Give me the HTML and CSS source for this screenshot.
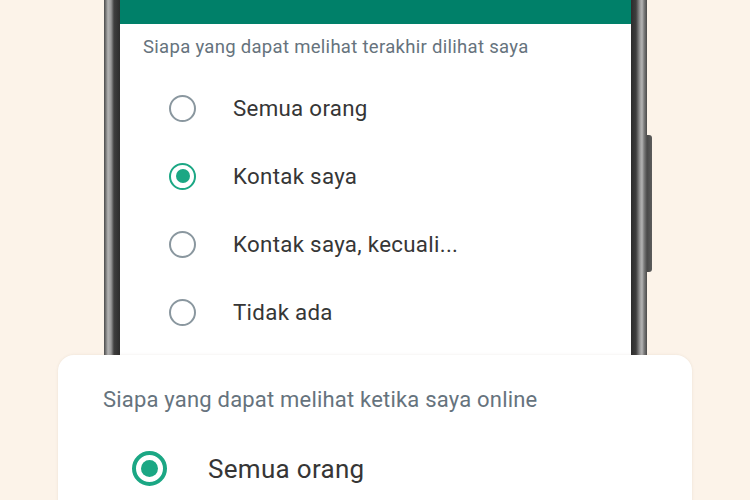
FILE: index.html
```html
<!DOCTYPE html>
<html lang="id">
<head>
    <meta charset="UTF-8">
    <meta name="viewport" content="width=device-width, initial-scale=1.0">
    <title>Privasi - Terakhir dilihat</title>
    <link rel="stylesheet" href="styles.css">
</head>
<body>
    <!-- Ponsel di belakang -->
    <div class="phone">
        <div class="bezel bezel-left"></div>
        <div class="screen">
            <div class="topbar"></div>
            <p class="question">Siapa yang dapat melihat terakhir dilihat saya</p>
            <ul class="options">
                <li class="option"><span class="radio"></span>Semua orang</li>
                <li class="option"><span class="radio checked"></span>Kontak saya</li>
                <li class="option"><span class="radio"></span>Kontak saya, kecuali...</li>
                <li class="option"><span class="radio"></span>Tidak ada</li>
            </ul>
        </div>
        <div class="bezel bezel-right"></div>
        <div class="side-button"></div>
    </div>

    <!-- Kartu di depan -->
    <div class="card">
        <p class="card-question">Siapa yang dapat melihat ketika saya online</p>
        <div class="card-option"><span class="radio big checked"></span>Semua orang</div>
    </div>
</body>
</html>
```

FILE: styles.css
```css
/* Ustawienia ogólne */
body {
    margin: 0;
    width: 750px;
    height: 500px;
    overflow: hidden;
    position: relative;
    background-color: #fcf3e9;
    font-family: Roboto, "Noto Sans", sans-serif;
}

/* Telefon */
.phone {
    position: relative;
    display: flex;
    margin-left: 104px;
    width: 543px;
    height: 355px;
}

.bezel {
    width: 16px;
    flex-shrink: 0;
}

.bezel-left {
    background: linear-gradient(to right, #4a4a4a 0, #7d7d7d 2px, #b4b4b4 4px, #9a9a9a 7px, #3e3e3e 10px, #2c2c2c 16px);
}

.bezel-right {
    background: linear-gradient(to right, #2c2c2c 0, #3e3e3e 5px, #9a9a9a 9px, #b4b4b4 11px, #7d7d7d 13px, #4a4a4a 16px);
}

.side-button {
    position: absolute;
    left: 539px;
    top: 135px;
    width: 9px;
    height: 137px;
    background: linear-gradient(to right, #3a3a3a, #5c5c5c);
    border-radius: 0 3px 3px 0;
    z-index: -1;
}

.screen {
    flex: 1;
    background-color: #fff;
}

.topbar {
    height: 24px;
    background-color: #008069;
}

.question {
    margin: 12px 0 0 23px;
    font-size: 18.5px;
    line-height: 22px;
    color: #66737d;
    letter-spacing: 0.3px;
}

.options {
    list-style: none;
    margin: 0;
    padding: 16px 0 0 0;
}

.option {
    display: flex;
    align-items: center;
    height: 68px;
    padding-left: 49px;
    font-size: 22.3px;
    color: #363636;
    letter-spacing: 0.3px;
}

/* Przyciski radiowe */
.radio {
    box-sizing: border-box;
    width: 27px;
    height: 27px;
    border: 2.5px solid #8a979f;
    border-radius: 50%;
    margin-right: 37px;
    display: flex;
    align-items: center;
    justify-content: center;
}

.radio.checked {
    border-color: #1ba784;
}

.radio.checked::after {
    content: "";
    width: 14px;
    height: 14px;
    border-radius: 50%;
    background-color: #1ba784;
}

/* Karta */
.card {
    position: absolute;
    left: 58px;
    top: 355px;
    width: 634px;
    height: 170px;
    background-color: #fff;
    border-radius: 16px;
    box-shadow: 0 0 3px rgba(120, 100, 80, 0.12);
}

.card-question {
    margin: 32px 0 0 45px;
    font-size: 22px;
    line-height: 26px;
    color: #66737d;
    letter-spacing: 0.2px;
}

.card-option {
    display: flex;
    align-items: center;
    margin: 38px 0 0 74px;
    font-size: 26px;
    color: #363636;
    letter-spacing: 0.3px;
}

.radio.big {
    width: 35px;
    height: 35px;
    border-width: 4px;
    margin-right: 41px;
}

.radio.big::after {
    width: 17px;
    height: 17px;
}
```
